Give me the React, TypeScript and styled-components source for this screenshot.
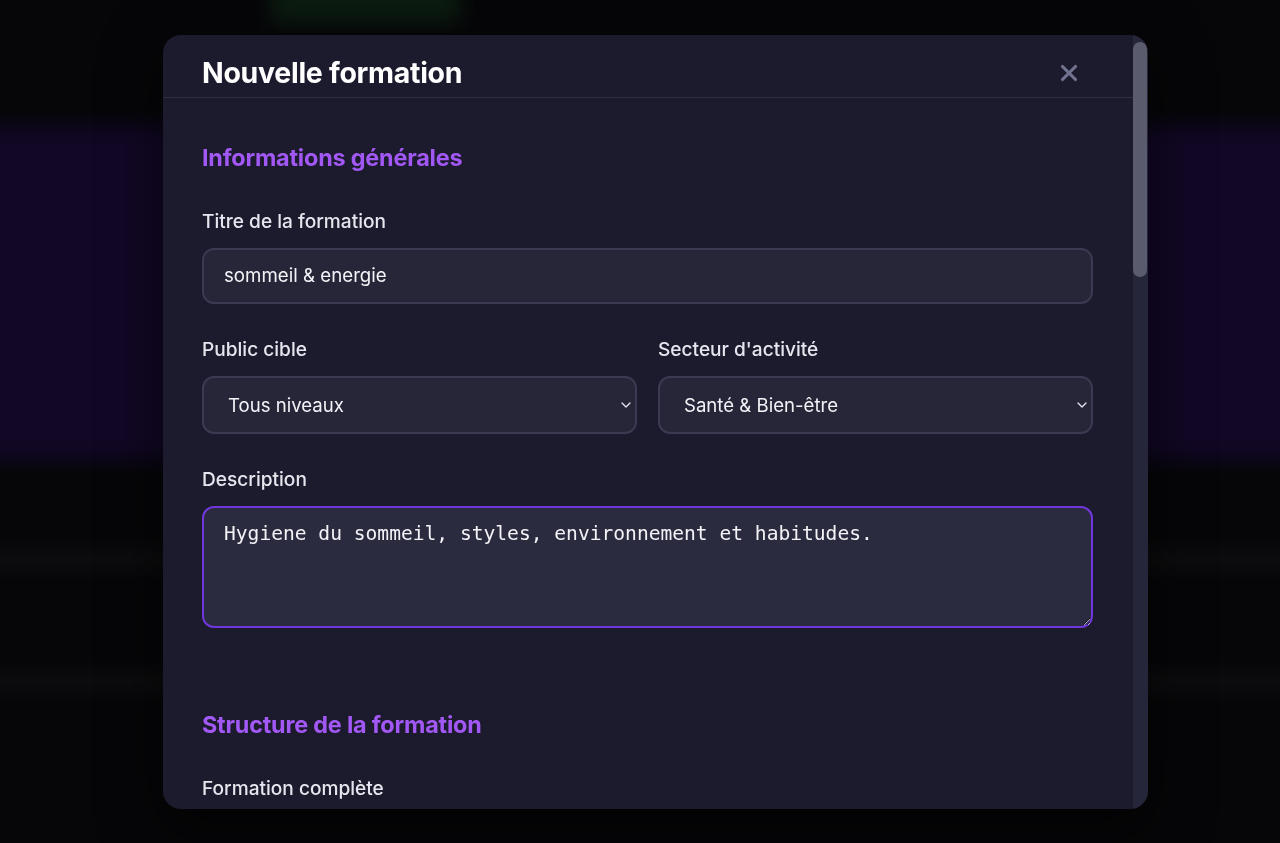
import React, { useEffect, useRef } from "react";
import styled, { createGlobalStyle } from "styled-components";
import { ChevronDown, X } from "lucide-react";

const GlobalStyle = createGlobalStyle`
  html, body {
    margin: 0;
    padding: 0;
    background: #08080b;
    overflow: hidden;
  }
  * {
    box-sizing: border-box;
  }
`;

const Page = styled.div`
  position: fixed;
  inset: -20px;
  display: flex;
  flex-direction: column;
  background: #08080b;
  filter: blur(10px);
`;

const TopBar = styled.div`
  height: 145px;
  padding: 0 0 0 290px;
  display: flex;
  align-items: flex-start;
`;

const GlowPill = styled.div`
  width: 190px;
  height: 45px;
  background: #0f2415;
  border-radius: 0 0 6px 6px;
`;

const Hero = styled.div`
  height: 335px;
  background: #180a33;
`;

const Stripe = styled.div<{ $top: number }>`
  margin-top: ${(p) => p.$top}px;
  height: 18px;
  background: #141417;
`;

const Overlay = styled.div`
  position: fixed;
  inset: 0;
  display: flex;
  align-items: center;
  justify-content: center;
  padding-left: 31px;
  background: rgba(0, 0, 0, 0.25);
  font-family: Inter, "Noto Sans", sans-serif;
`;

const Modal = styled.div`
  width: 985px;
  height: 774px;
  display: flex;
  background: #1c1b2e;
  border-radius: 18px;
  overflow: hidden;
  box-shadow: 0 20px 60px rgba(0, 0, 0, 0.6);
`;

const Scroller = styled.div`
  flex: 1;
  min-width: 0;
  overflow: hidden;
`;

const ScrollTrack = styled.div`
  width: 15px;
  padding: 7px 1px 0 0;
  background: #26263a;
`;

const ScrollThumb = styled.div`
  height: 235px;
  background: #5b5b6e;
  border-radius: 7px;
`;

const Header = styled.div`
  height: 63px;
  padding: 14px 51px 0 39px;
  display: flex;
  align-items: center;
  justify-content: space-between;
  border-bottom: 1px solid #2f2e45;
`;

const Title = styled.h2`
  margin: 0;
  font-size: 28.5px;
  font-weight: 700;
  letter-spacing: -0.3px;
  color: #ffffff;
`;

const CloseButton = styled.button`
  border: none;
  background: none;
  padding: 0;
  display: flex;
  color: #72738f;
  cursor: pointer;
`;

const Body = styled.div`
  padding: 45px 40px 40px 39px;
`;

const Section = styled.section`
  margin-bottom: 82px;
`;

const SectionTitle = styled.h3`
  margin: 0 0 37px;
  font-size: 23.4px;
  line-height: 29px;
  font-weight: 700;
  letter-spacing: -0.2px;
  color: #a258f5;
`;

const Row = styled.div`
  display: grid;
  grid-template-columns: 1fr 1fr;
  gap: 21px;
`;

const Field = styled.div`
  margin-bottom: 33px;
`;

const Label = styled.label`
  display: block;
  margin-bottom: 14px;
  font-size: 19.1px;
  line-height: 25px;
  font-weight: 500;
  color: #e6e6ee;
`;

const TextInput = styled.input`
  display: block;
  width: 100%;
  height: 56px;
  padding: 0 20px;
  font-family: inherit;
  font-size: 18.7px;
  color: #f2f2f7;
  background: #262638;
  border: 2px solid #3a3a52;
  border-radius: 12px;
  outline: none;
`;

const SelectWrap = styled.div`
  position: relative;
`;

const Select = styled.select`
  display: block;
  width: 100%;
  height: 58px;
  padding: 0 24px;
  appearance: none;
  font-family: inherit;
  font-size: 18.6px;
  color: #f2f2f7;
  background: #262638;
  border: 2px solid #3a3a52;
  border-radius: 12px;
  outline: none;
`;

const Chevron = styled.span`
  position: absolute;
  right: 3px;
  top: 50%;
  transform: translateY(-50%);
  display: flex;
  color: #e6e6ee;
  pointer-events: none;
`;

const TextArea = styled.textarea`
  display: block;
  width: 100%;
  height: 122px;
  padding: 14px 20px;
  font-family: "DejaVu Sans Mono", "Liberation Mono", monospace;
  font-size: 19.6px;
  line-height: 24px;
  color: #f2f2f7;
  caret-color: #f2f2f7;
  background: #2b2b3f;
  border: 2px solid #7038dc;
  border-radius: 12px;
  outline: none;
  resize: vertical;
`;

const description = "Hygiene du sommeil, styles, environnement et habitudes.";

export default function App() {
  const areaRef = useRef<HTMLTextAreaElement>(null);

  useEffect(() => {
    const el = areaRef.current;
    if (el) {
      el.focus();
      el.setSelectionRange(description.length, description.length);
    }
  }, []);

  return (
    <>
      <GlobalStyle />
      <Page>
        <TopBar>
          <GlowPill />
        </TopBar>
        <Hero />
        <Stripe $top={90} />
        <Stripe $top={105} />
      </Page>
      <Overlay>
        <Modal>
          <Scroller>
            <Header>
              <Title>Nouvelle formation</Title>
              <CloseButton aria-label="Fermer">
                <X size={26} strokeWidth={2.9} />
              </CloseButton>
            </Header>
            <Body>
              <Section>
                <SectionTitle>Informations générales</SectionTitle>
                <Field>
                  <Label>Titre de la formation</Label>
                  <TextInput defaultValue="sommeil & energie" />
                </Field>
                <Row>
                  <Field>
                    <Label>Public cible</Label>
                    <SelectWrap>
                      <Select defaultValue="tous">
                        <option value="tous">Tous niveaux</option>
                      </Select>
                      <Chevron>
                        <ChevronDown size={16} strokeWidth={1.9} />
                      </Chevron>
                    </SelectWrap>
                  </Field>
                  <Field>
                    <Label>Secteur d'activité</Label>
                    <SelectWrap>
                      <Select defaultValue="sante">
                        <option value="sante">Santé &amp; Bien-être</option>
                      </Select>
                      <Chevron>
                        <ChevronDown size={16} strokeWidth={1.9} />
                      </Chevron>
                    </SelectWrap>
                  </Field>
                </Row>
                <Field>
                  <Label>Description</Label>
                  <TextArea ref={areaRef} defaultValue={description} />
                </Field>
              </Section>
              <Section>
                <SectionTitle>Structure de la formation</SectionTitle>
                <Field>
                  <Label>Formation complète</Label>
                </Field>
              </Section>
            </Body>
          </Scroller>
          <ScrollTrack>
            <ScrollThumb />
          </ScrollTrack>
        </Modal>
      </Overlay>
    </>
  );
}
